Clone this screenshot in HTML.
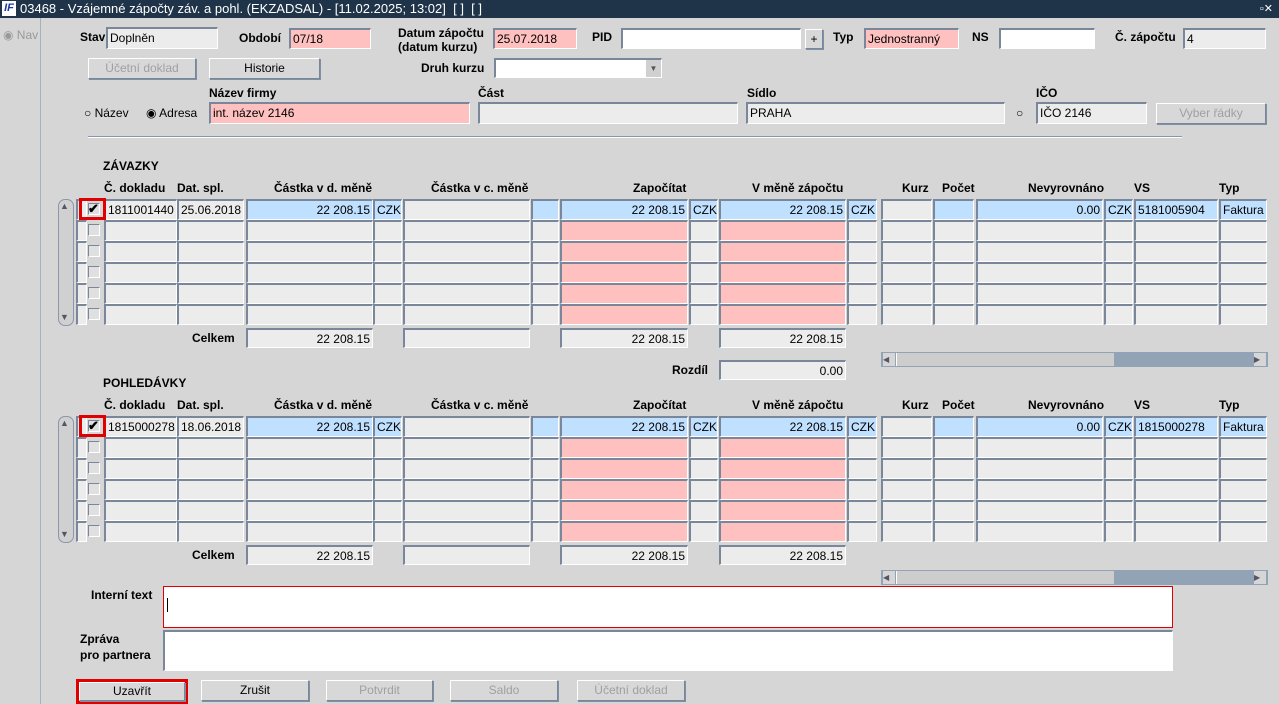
<!DOCTYPE html>
<html><head><meta charset="utf-8">
<style>
*{box-sizing:border-box}
body{margin:0;width:1279px;height:704px;background:#d6d6d6;font-family:"Liberation Sans",sans-serif;font-size:12px;color:#000;position:relative;overflow:hidden}
.a{position:absolute}
.l{position:absolute;font-weight:bold;white-space:nowrap;line-height:14px}
.f{position:absolute;background:#ececec;border-top:2px solid #7a869a;border-left:2px solid #7a869a;border-bottom:1px solid #fff;border-right:1px solid #fff;padding:0 2px;line-height:18px;white-space:nowrap;overflow:hidden}
.w{background:#fff}.p{background:#ffc0c0}.b{background:#c0e0ff}
.r{text-align:right}
.btn{position:absolute;background:#d8d8d8;border:1px solid #7a869a;border-top-color:#fff;border-left-color:#fff;box-shadow:1px 1px 0 #8090a4;text-align:center;line-height:19px}
.dis{color:#a0a0a0}
.cb{position:absolute;width:12px;height:12px;border-top:1px solid #7a869a;border-left:1px solid #7a869a;border-right:1px solid #fff;border-bottom:1px solid #fff;background:#e0e0e0}
.vs{position:absolute;width:16px;background:#d0d0d0;border:1px solid #8a96aa;border-radius:7px}
.hs{position:absolute;height:15px;background:#93a3b6}
</style></head><body>
<div class="a" style="left:0;top:0;width:1279px;height:18px;background:#1f3349;color:#fff;font-size:13px;line-height:17px;padding-left:20px">03468 - Vzájemné zápočty záv. a pohl. (EKZADSAL) - [11.02.2025; 13:02]&nbsp; [ ]&nbsp; [ ]</div>
<div class="a" style="left:2px;top:1px;width:14px;height:15px;background:#fff;color:#1a3aa0;font-weight:bold;font-style:italic;font-size:11px;line-height:15px;text-align:center">IF</div>
<div class="a" style="right:6px;top:2px;color:#fff;font-size:11px">▫✕</div>
<div class="a" style="left:40px;top:18px;width:1px;height:686px;background:#a8b0bc"></div>
<div class="a" style="left:3px;top:28px;color:#999">◉ Nav</div>

<div class="l" style="left:80px;top:30px">Stav</div><div class="f" style="left:106px;top:27px;width:112px;height:22px">Doplněn</div>
<div class="l" style="left:239px;top:31px">Období</div><div class="f p" style="left:289px;top:28px;width:82px;height:21px">07/18</div>
<div class="l" style="left:398px;top:26px">Datum zápočtu<br>(datum kurzu)</div><div class="f p" style="left:493px;top:28px;width:84px;height:21px">25.07.2018</div>
<div class="l" style="left:592px;top:30px">PID</div><div class="f w" style="left:621px;top:28px;width:180px;height:21px"></div>
<div class="btn" style="left:805px;top:29px;width:18px;height:20px">+</div>
<div class="l" style="left:833px;top:30px">Typ</div><div class="f p" style="left:864px;top:28px;width:95px;height:21px">Jednostranný</div>
<div class="l" style="left:972px;top:30px">NS</div><div class="f w" style="left:999px;top:28px;width:96px;height:21px"></div>
<div class="l" style="left:1115px;top:30px">Č. zápočtu</div><div class="f" style="left:1183px;top:28px;width:83px;height:21px">4</div>

<div class="btn dis" style="left:88px;top:58px;width:108px;height:21px">Účetní doklad</div>
<div class="btn" style="left:209px;top:58px;width:111px;height:21px">Historie</div>
<div class="l" style="left:421px;top:61px">Druh kurzu</div><div class="f w" style="left:494px;top:58px;width:168px;height:20px"></div>
<div class="a" style="left:646px;top:60px;width:15px;height:17px;background:#d0d0d0;font-size:8px;text-align:center;line-height:17px;color:#555">▼</div>

<div class="l" style="left:209px;top:86px">Název firmy</div><div class="l" style="left:478px;top:86px">Část</div><div class="l" style="left:747px;top:86px">Sídlo</div><div class="l" style="left:1036px;top:86px">IČO</div>
<div class="a" style="left:84px;top:106px">○ Název</div><div class="a" style="left:146px;top:106px">◉ Adresa</div>
<div class="f p" style="left:209px;top:102px;width:261px;height:22px">int. název 2146</div>
<div class="f" style="left:478px;top:102px;width:260px;height:22px"></div>
<div class="f" style="left:746px;top:102px;width:259px;height:22px">PRAHA</div>
<div class="a" style="left:1016px;top:106px">○</div>
<div class="f" style="left:1036px;top:102px;width:111px;height:22px">IČO 2146</div>
<div class="btn dis" style="left:1156px;top:103px;width:110px;height:21px">Vyber řádky</div>
<div class="a" style="left:88px;top:136px;width:1094px;height:1px;background:#8a96a8"></div>
<div class="a" style="left:88px;top:137px;width:1094px;height:1px;background:#fff"></div>

<div class="l" style="left:103px;top:159px">ZÁVAZKY</div>
<div class="l" style="left:103px;top:376px">POHLEDÁVKY</div>
<div id="g"></div>

<div class="l" style="left:672px;top:363px">Rozdíl</div><div class="f r" style="left:719px;top:360px;width:127px;height:20px">0.00</div>

<div class="l" style="left:91px;top:588px">Interní text</div>
<div class="a" style="left:163px;top:586px;width:1010px;height:42px;background:#fff;border:1px solid #e00000"></div>
<div class="a" style="left:167px;top:598px;width:1px;height:14px;background:#000"></div>
<div class="l" style="left:80px;top:631px;line-height:16px">Zpráva<br>pro partnera</div>
<div class="f w" style="left:163px;top:630px;width:1010px;height:41px"></div>

<div class="a" style="left:76px;top:679px;width:112px;height:25px;border:3px solid #e00000"></div>
<div class="btn" style="left:79px;top:682px;width:106px;height:19px;line-height:17px">Uzavřít</div>
<div class="btn" style="left:201px;top:680px;width:108px;height:21px">Zrušit</div>
<div class="btn dis" style="left:326px;top:680px;width:107px;height:21px">Potvrdit</div>
<div class="btn dis" style="left:450px;top:680px;width:108px;height:21px">Saldo</div>
<div class="btn dis" style="left:577px;top:680px;width:108px;height:21px">Účetní doklad</div>

<script>
var cols=[[76,11],[104,73],[177,67],[246,127],[373,29],[403,127],[531,28],[560,128],[689,29],[719,127],[847,30],[881,51],[933,41],[976,127],[1104,29],[1134,84],[1219,48]];
var hdr=[[104,"Č. dokladu"],[177,"Dat. spl."],[274,"Částka v d. měně"],[431,"Částka v c. měně"],[633,"Započítat"],[752,"V měně zápočtu"],[902,"Kurz"],[942,"Počet"],[1028,"Nevyrovnáno"],[1134,"VS"],[1219,"Typ"]];
var data=[["1811001440","25.06.2018","22 208.15","CZK","","","22 208.15","CZK","22 208.15","CZK","","","0.00","CZK","5181005904","Faktura"],["1815000278","18.06.2018","22 208.15","CZK","","","22 208.15","CZK","22 208.15","CZK","","","0.00","CZK","1815000278","Faktura"]];
var right={3:1,7:1,9:1,13:1};
var h="";
function grid(hy,ry,cy,sy,d){
 hdr.forEach(function(x){h+='<div class="l" style="left:'+x[0]+'px;top:'+hy+'px">'+x[1]+'</div>';});
 h+='<div class="vs" style="left:58px;top:'+ry+'px;height:127px"></div>';
 h+='<div class="a" style="left:60px;top:'+(ry+2)+'px;font-size:9px;color:#556">▲</div><div class="a" style="left:60px;top:'+(ry+113)+'px;font-size:9px;color:#556">▼</div>';
 for(var r=0;r<6;r++){var y=ry+r*21;
  cols.forEach(function(c,i){var cls="f";
   if(r==0&&(i==3||i==4||i==6||i==7||i==8||i==9||i==10||i==12||i==13||i==14||i==15||i==16))cls+=" b";
   if(r>0&&(i==7||i==9))cls+=" p";
   var t=(r==0&&i>0)?d[i-1]:"";if(right[i])cls+=" r";
   h+='<div class="'+cls+'" style="left:'+c[0]+'px;top:'+y+'px;width:'+c[1]+'px;height:21px">'+t+'</div>';});
  h+='<div class="cb" style="left:88px;top:'+(y+4)+'px"></div>';
 }
 h+='<div class="a" style="left:79px;top:'+(ry-1)+'px;width:27px;height:22px;border:3px solid #e00000"></div>';
 h+='<div class="a" style="left:88px;top:'+(ry+2)+'px;font-size:13px;font-weight:bold">✔</div>';
 h+='<div class="l" style="left:192px;top:'+(cy+3)+'px">Celkem</div>';
 [[246,127,"22 208.15"],[403,127,""],[560,128,"22 208.15"],[719,127,"22 208.15"]].forEach(function(x){h+='<div class="f r" style="left:'+x[0]+'px;top:'+cy+'px;width:'+x[1]+'px;height:20px">'+x[2]+'</div>';});
 h+='<div class="hs" style="left:881px;top:'+sy+'px;width:387px"></div><div class="a" style="left:896px;top:'+(sy+1)+'px;width:218px;height:13px;background:#cdcdcd;border-left:1px solid #fff"></div>';
 h+='<div class="a" style="left:883px;top:'+(sy+1)+'px;width:12px;height:13px;background:#d6d6d6;font-size:8px;color:#556;line-height:13px">◀</div><div class="a" style="left:1254px;top:'+(sy+1)+'px;width:12px;height:13px;background:#d6d6d6;font-size:8px;color:#556;line-height:13px">▶</div>';
}
grid(181,199,328,352,data[0]);
grid(398,416,545,570,data[1]);
document.getElementById("g").innerHTML=h;
</script>
</body></html>
